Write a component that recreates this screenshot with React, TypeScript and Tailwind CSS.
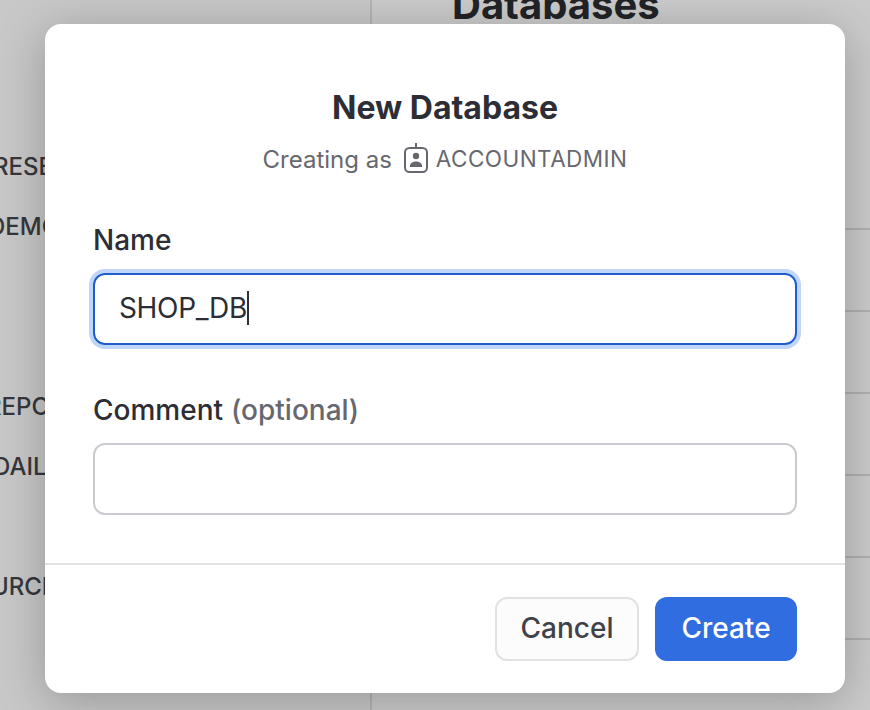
import React from "react";

const sidebarRows: { label: string; offset: string }[] = [
  { label: "RESEARCH", offset: "ml-[-7px]" },
  { label: "DEMO", offset: "ml-[-12px]" },
  { label: "", offset: "" },
  { label: "", offset: "" },
  { label: "REPORTS", offset: "ml-[-14px]" },
  { label: "DAILY", offset: "ml-[-7px]" },
  { label: "", offset: "" },
  { label: "SOURCE", offset: "ml-[-43px]" },
];

function BadgeIcon() {
  return (
    <svg width="26" height="32" viewBox="0 0 26 32" fill="none" className="ml-[11px] shrink-0">
      <path d="M13 1v5" stroke="#67686f" strokeWidth="2" />
      <rect x="2" y="6" width="22" height="24" rx="4.5" stroke="#67686f" strokeWidth="2" />
      <circle cx="13" cy="14" r="3.2" fill="#67686f" />
      <path d="M7 25v-1.2c0-2.6 2.6-4.2 6-4.2s6 1.6 6 4.2V25z" fill="#67686f" />
    </svg>
  );
}

function Page() {
  return (
    <div className="flex h-full bg-[#cbcbcb]">
      <aside className="h-full w-[372px] shrink-0 overflow-hidden border-r-2 border-[#b5b5b5] bg-[#c8c8c8] pt-[137px]">
        {sidebarRows.map((row, i) => (
          <div key={i} className="flex h-[60px] items-center text-[24px] font-[450] text-[#36373c]">
            <span className={row.offset}>{row.label}</span>
          </div>
        ))}
      </aside>
      <main className="flex-1 overflow-hidden">
        <h1 className="mt-[-18px] h-[166px] pl-20 text-[40px] leading-[46px] font-bold text-[#222327]">Databases</h1>
        {[0, 1, 2, 3, 4, 5].map((i) => (
          <div key={i} className="h-[82px] border-b-2 border-[#b0b0b0]" />
        ))}
      </main>
    </div>
  );
}

function Dialog() {
  return (
    <div
      role="dialog"
      className="absolute top-6 left-[45px] flex h-[669px] w-[800px] flex-col rounded-2xl bg-white shadow-[0_8px_48px_rgba(0,0,0,0.25)]"
    >
      <div className="flex h-[539px] flex-col px-12 pt-[60px]">
        <h2 className="text-center text-[32px] leading-[48px] font-bold text-[#2d2e35]">New Database</h2>
        <div className="mt-[10px] flex h-8 items-center justify-center text-[24px] text-[#67686f]">
          <span className="pt-[3px]">Creating as</span>
          <BadgeIcon />
          <span className="ml-[7px] pt-[2px] text-[22.5px] tracking-[0.45px]">ACCOUNTADMIN</span>
        </div>
        <label className="mt-[46px] flex h-10 items-center text-[28px] font-medium text-[#2d2e35]">Name</label>
        <div className="mt-[13px] flex h-[72px] shrink-0 items-center rounded-xl border-2 border-[#1f5dcc] px-6 pb-0.5 text-[28px] text-[#2d2e35] shadow-[0_0_0_4px_#bfd5f9]">
          <span className="tracking-[-0.35px]">SHOP_DB</span>
          <span className="h-[34px] w-0.5 bg-[#2d2e35]" />
        </div>
        <label className="mt-[45px] flex h-10 items-center gap-2 text-[28px] font-medium text-[#2d2e35]">
          <span>Comment</span>
          <span className="text-[#67686f]">(optional)</span>
        </label>
        <div className="mt-[13px] h-[72px] shrink-0 rounded-xl border-2 border-[#cacbd0]" />
      </div>
      <div className="flex h-[130px] justify-end gap-4 border-t-2 border-[#e1e1e2] px-12 pt-8">
        <button className="h-16 w-36 rounded-xl border-2 border-[#e2e2e2] bg-[#fcfcfc] pb-0.5 text-[28px] font-medium text-[#414247]">
          Cancel
        </button>
        <button className="h-16 w-[142px] rounded-xl bg-[#306de0] pb-0.5 text-[28px] font-medium text-white">Create</button>
      </div>
    </div>
  );
}

export default function App() {
  return (
    <div className="relative h-[710px] w-[870px] overflow-hidden font-['Inter',sans-serif]">
      <Page />
      <Dialog />
    </div>
  );
}
